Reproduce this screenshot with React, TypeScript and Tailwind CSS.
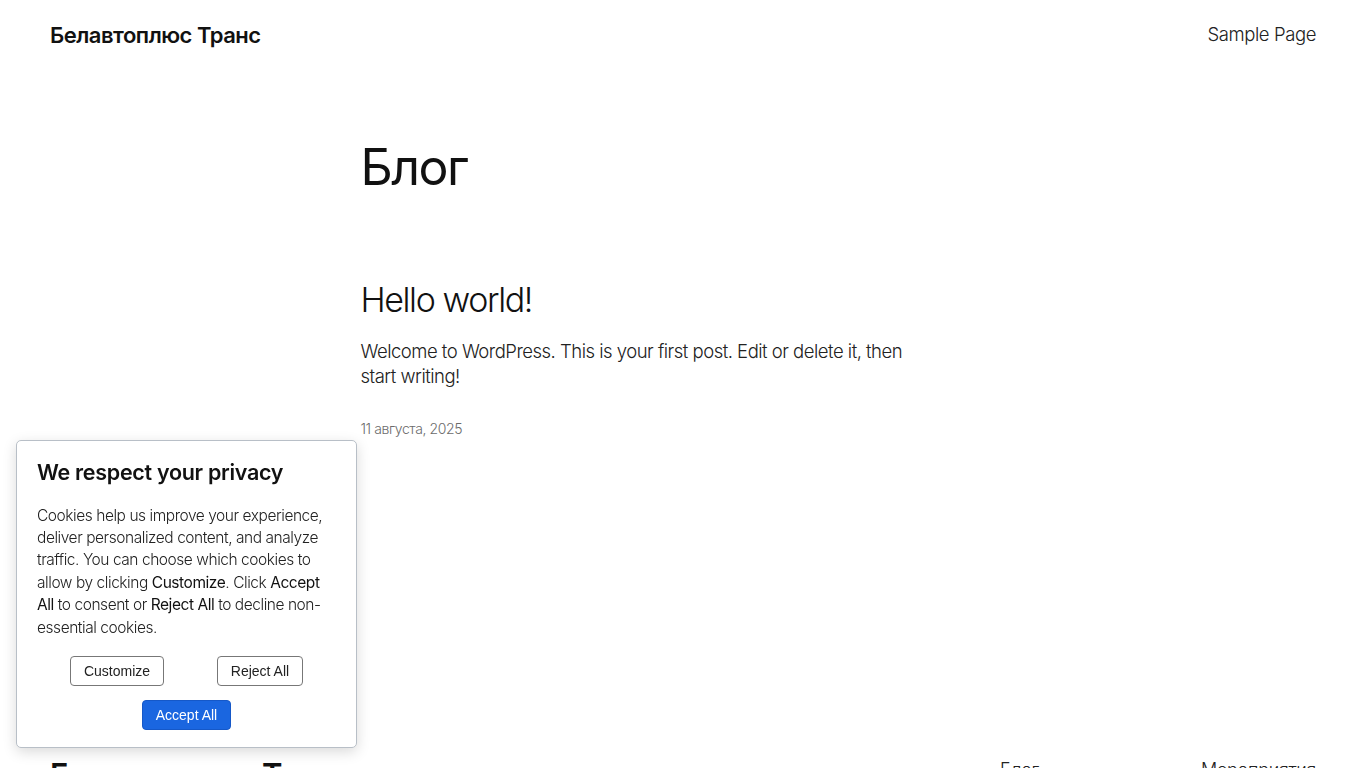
import { useState } from "react";

const FONT = "font-['Inter',_'Noto_Sans',_sans-serif]";

function CookieBanner() {
  const [open, setOpen] = useState(true);
  if (!open) return null;

  return (
    <div className="fixed left-4 bottom-[20px] w-[341px] bg-white border border-[#b8bfc7] rounded-[5px] shadow-[0_4px_14px_rgba(0,0,0,0.15)] px-5 pt-[15px] pb-[17px] z-50">
      <p className="text-[21.5px] leading-[32px] font-semibold text-[#111] tracking-[-0.3px]">
        We respect your privacy
      </p>
      <p className="mt-[17px] text-[15.5px] leading-[22.4px] font-light text-[#222] tracking-[-0.45px]">
        Cookies help us improve your experience, deliver personalized content,
        and analyze traffic. You can choose which cookies to allow by clicking{" "}
        <span className="font-normal text-[#111]">Customize</span>. Click{" "}
        <span className="font-normal text-[#111]">Accept All</span> to consent or{" "}
        <span className="font-normal text-[#111]">Reject All</span> to decline non-essential
        cookies.
      </p>
      <div className="mt-[17px] flex justify-center gap-[53px] font-['Liberation_Sans',_Arial,_sans-serif] text-[14px]">
        <button
          className="h-[30px] w-[94px] border border-[#777] rounded-[4px] text-[#222] bg-white"
          onClick={() => setOpen(false)}
        >
          Customize
        </button>
        <button
          className="h-[30px] w-[86px] border border-[#777] rounded-[4px] text-[#222] bg-white"
          onClick={() => setOpen(false)}
        >
          Reject All
        </button>
      </div>
      <div className="mt-[14px] flex justify-center font-['Liberation_Sans',_Arial,_sans-serif] text-[14px]">
        <button
          className="h-[30px] w-[89px] border border-[#1558c8] rounded-[4px] text-white bg-[#1a66e0]"
          onClick={() => setOpen(false)}
        >
          Accept All
        </button>
      </div>
    </div>
  );
}

export default function App() {
  return (
    <div className={`${FONT} bg-white text-[#111] min-h-screen`}>
      {/* Header */}
      <header className="flex items-center justify-between px-[50px] h-[70px]">
        <a className="text-[22px] font-semibold tracking-[-0.5px] text-[#111]">
          Белавтоплюс Транс
        </a>
        <nav>
          <a className="text-[18.5px] font-light tracking-[-0.4px] text-[#222]">
            Sample Page
          </a>
        </nav>
      </header>

      {/* Main */}
      <main className="h-[668px]">
        <div className="w-[645px] mx-auto pt-[67px]">
          <h1 className="text-[50px] leading-[1.2] font-normal tracking-[-1.5px]">
            Блог
          </h1>
          <article className="mt-[83px]">
            <h2 className="text-[34px] leading-[1.2] font-light tracking-[-1.4px]">
              Hello world!
            </h2>
            <p className="mt-[18px] w-[545px] text-[18.5px] leading-[25px] font-light tracking-[-0.5px] text-[#222]">
              Welcome to WordPress. This is your first post. Edit or delete it,
              then start writing!
            </p>
            <p className="mt-[29px] text-[14px] font-light text-[#6b6b6b] tracking-[-0.4px]">
              11 августа, 2025
            </p>
          </article>
        </div>
      </main>

      {/* Footer */}
      <footer className="flex justify-between px-[50px] pt-[14px] pb-16">
        <p className="text-[31px] font-semibold tracking-[-0.3px]">
          Белавтоплюс Транс
        </p>
        <div className="flex gap-[162px] pt-[4px] text-[18px] font-light tracking-[-0.3px] text-[#222]">
          <a>Блог</a>
          <a>Мероприятия</a>
        </div>
      </footer>

      <CookieBanner />
    </div>
  );
}
